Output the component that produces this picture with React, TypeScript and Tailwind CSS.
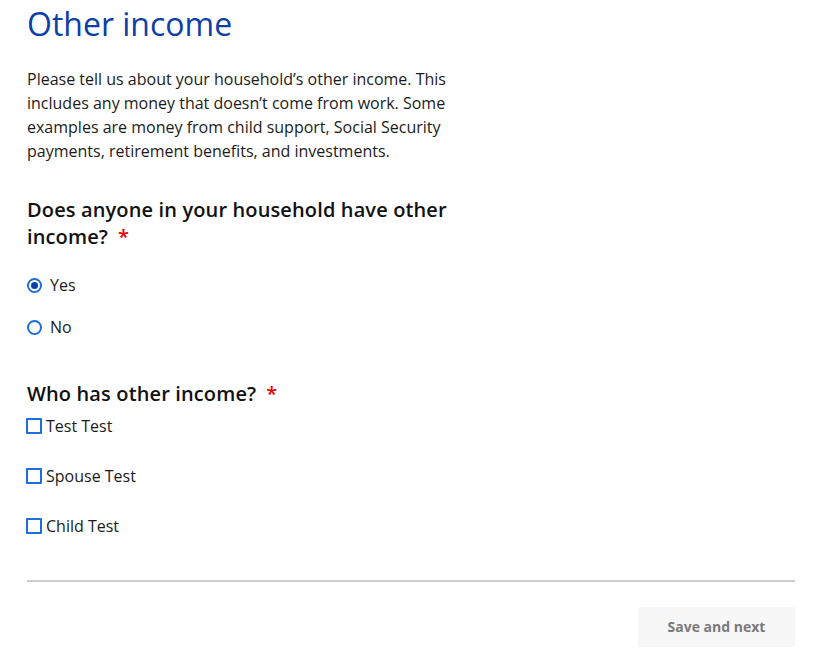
import React from "react";

function Radio({ checked, label }: { checked: boolean; label: string }) {
  return (
    <label className="flex items-center h-[24px] leading-[24px] text-[16px] text-[#1b1b1b]">
      <span className="flex items-center justify-center w-[15px] h-[15px] rounded-full border-2 border-[#1a6ee0] shrink-0">
        {checked && <span className="w-[7px] h-[7px] rounded-full bg-[#0b3fa6]" />}
      </span>
      <span className="ml-[8px]">{label}</span>
    </label>
  );
}

function Check({ label }: { label: string }) {
  return (
    <label className="flex items-center h-[24px] leading-[24px] text-[16px] text-[#1b1b1b] -ml-[1px]">
      <span className="w-[16px] h-[16px] border-2 border-[#1a6ee0] rounded-[1px] shrink-0" />
      <span className="ml-[4px]">{label}</span>
    </label>
  );
}

export default function App() {
  return (
    <div
      className="w-[819px] h-[664px] bg-white pl-[27px] pr-[24px] overflow-hidden"
      style={{ fontFamily: "'Open Sans', 'Noto Sans', sans-serif" }}
    >
      <h1 className="text-[32px] leading-[47px] font-normal text-[#0d3fa6]">Other income</h1>
      <p className="mt-[20px] w-[432px] text-[16px] leading-[24px] text-[#1b1b1b]">
        Please tell us about your household’s other income. This includes any money that doesn’t come from
        work. Some examples are money from child support, Social Security payments, retirement benefits, and
        investments.
      </p>
      <h2 className="mt-[33px] w-[432px] text-[20px] leading-[27px] font-semibold tracking-[0.13px] text-[#111]">
        Does anyone in your household have other income?<span className="ml-[10px] text-[#e60000]">*</span>
      </h2>
      <div className="mt-[23px] flex flex-col gap-[18px]">
        <Radio checked label="Yes" />
        <Radio checked={false} label="No" />
      </div>
      <h2 className="mt-[41px] text-[20px] leading-[27px] font-semibold tracking-[0.13px] text-[#111]">
        Who has other income?<span className="ml-[10px] text-[#e60000]">*</span>
      </h2>
      <div className="mt-[7px] flex flex-col gap-[26px]">
        <Check label="Test Test" />
        <Check label="Spouse Test" />
        <Check label="Child Test" />
      </div>
      <div className="mt-[42px] h-[2px] bg-[#cccccc]" />
      <div className="mt-[25px] flex justify-end">
        <button className="w-[157px] h-[40px] pb-[1px] bg-[#f7f7f7] text-[14px] font-bold text-[#7a7a7a]">
          Save and next
        </button>
      </div>
    </div>
  );
}
